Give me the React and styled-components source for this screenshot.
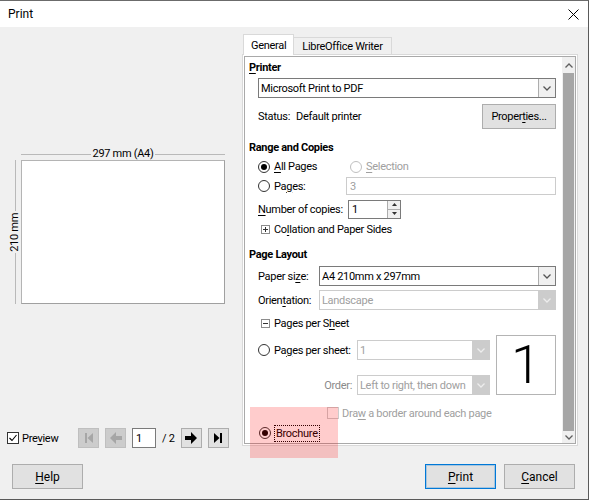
import styled, { createGlobalStyle } from 'styled-components'

const GlobalStyle = createGlobalStyle`
  html, body { margin: 0; padding: 0; background: #fff; }
  body {
    font-family: Roboto, "Noto Sans", "Liberation Sans", sans-serif;
    font-size: 11px;
    letter-spacing: -0.3px;
    color: #000;
  }
  * { box-sizing: border-box; }
`

const Dialog = styled.div`
  position: relative;
  width: 589px;
  height: 500px;
  display: flex;
  flex-direction: column;
  background: #f0f0f0;
  border-top: 1px solid #6b6b6b;
  border-right: 1px solid #5a5a5a;
  border-bottom: 1px solid #5a5a5a;
  overflow: hidden;
`

const TitleBar = styled.div`
  height: 26px;
  flex: 0 0 26px;
  background: #fff;
  display: flex;
  align-items: center;
  justify-content: space-between;
  padding: 0 9px 0 8px;
  font-size: 12px;
  letter-spacing: 0;
`

const Body = styled.div`
  flex: 0 0 423px;
  display: flex;
  min-width: 0;
`

const LeftPane = styled.div`
  flex: 0 0 241px;
  display: flex;
  flex-direction: column;
  padding: 121px 0 3px 0;
`

const Figure = styled.div`
  display: grid;
  grid-template-columns: 12px 204px;
  grid-template-rows: 12px 144px;
  margin-left: 9px;
`

const DimH = styled.div`
  grid-column: 2;
  grid-row: 1;
  display: flex;
  align-items: center;
  gap: 2px;
  line-height: 12px;
`

const DimV = styled.div`
  grid-column: 1;
  grid-row: 2;
  display: flex;
  flex-direction: column;
  align-items: center;
  gap: 2px;
`

const Line = styled.div`
  flex: 1;
  background: #b9b9b9;
  ${p => (p.$vertical ? 'width: 1px;' : 'height: 1px;')}
`

const VText = styled.span`
  writing-mode: vertical-rl;
  transform: rotate(180deg);
  line-height: 12px;
`

const Page = styled.div`
  grid-column: 2;
  grid-row: 2;
  background: #fff;
  border: 1px solid #b4b4b4;
  border-right-color: #a0a0a0;
  border-bottom-color: #a0a0a0;
`

const NavRow = styled.div`
  margin-top: auto;
  height: 20px;
  display: flex;
  align-items: center;
  padding-left: 7px;
  gap: 6px;
  white-space: nowrap;
`

const CheckLabel = styled.label`
  display: flex;
  align-items: center;
  gap: 3px;
  width: ${p => (p.$w ? `${p.$w}px` : 'auto')};
  flex: 0 0 auto;
  white-space: nowrap;
  color: ${p => (p.$disabled ? '#a0a0a0' : '#000')};
`

const Check = styled.span`
  width: 12px;
  height: 12px;
  border: 1px solid ${p => (p.$disabled ? '#cccccc' : '#333')};
  background: #fff;
  display: inline-flex;
  align-items: center;
  justify-content: center;
`

const NavBtn = styled.div`
  flex: 0 0 21px;
  height: 20px;
  display: flex;
  align-items: center;
  justify-content: center;
  background: ${p => (p.$disabled ? '#cccccc' : '#e1e1e1')};
  border: 1px solid ${p => (p.$disabled ? '#bfbfbf' : '#adadad')};
  color: ${p => (p.$disabled ? '#a6a6a6' : '#000')};
`

const PageInput = styled.div`
  flex: 0 0 24px;
  height: 20px;
  background: #fff;
  border: 1px solid #7a7a7a;
  padding-left: 3px;
  display: flex;
  align-items: center;
`

const PageCount = styled.span`
  flex: 0 0 12px;
`

const RightPane = styled.div`
  flex: 1;
  min-width: 0;
  display: flex;
  flex-direction: column;
  padding: 7px 10px 5px 1px;
`

const TabStrip = styled.div`
  display: flex;
  align-items: flex-end;
  height: 21px;
  padding-left: 1px;
`

const Tab = styled.div`
  position: relative;
  z-index: ${p => (p.$active ? 2 : 1)};
  height: ${p => (p.$active ? 21 : 18)}px;
  padding: ${p => (p.$active ? '1px 7px 0' : '0 8px')};
  display: flex;
  align-items: center;
  background: ${p => (p.$active ? '#fff' : '#f0f0f0')};
  border: 1px solid #d9d9d9;
  border-bottom: ${p => (p.$active ? 'none' : '1px solid #d9d9d9')};
  margin-left: ${p => (p.$active ? 0 : -1)}px;
`

const Panel = styled.div`
  flex: 1;
  min-width: 0;
  margin-top: -1px;
  background: #fff;
  border: 1px solid #d9d9d9;
  padding: 1px;
  display: flex;
`

const Viewport = styled.div`
  flex: 1;
  min-width: 0;
  display: flex;
  border: 1px solid #a9a9a9;
  overflow: hidden;
`

const Content = styled.div`
  flex: 1;
  min-width: 0;
  display: flex;
  flex-direction: column;
  padding: 0 6px 0 4px;
  overflow: hidden;
`

const Scrollbar = styled.div`
  flex: 0 0 13px;
  display: flex;
  flex-direction: column;
  background: #f0f0f0;
`

const ScrollArrow = styled.div`
  height: ${p => p.$h}px;
  display: flex;
  align-items: center;
  justify-content: center;
`

const Thumb = styled.div`
  flex: 1;
  margin: 0 1px;
  background: #a6a6a6;
`

const Heading = styled.div`
  height: 20px;
  margin-top: ${p => p.$mt || 0}px;
  display: flex;
  align-items: center;
  font-weight: 700;
`

const Row = styled.div`
  height: ${p => p.$h || 20}px;
  margin-top: ${p => p.$mt || 0}px;
  display: flex;
  align-items: center;
  padding-left: ${p => p.$indent ?? 9}px;
  color: ${p => (p.$disabled ? '#a0a0a0' : '#000')};
`

const Option = styled.label`
  display: flex;
  align-items: center;
  gap: 4px;
  width: ${p => (p.$w ? `${p.$w}px` : 'auto')};
  flex: 0 0 auto;
  white-space: nowrap;
  color: ${p => (p.$disabled ? '#a0a0a0' : '#000')};
`

const Radio = styled.span`
  width: 12px;
  height: 12px;
  border-radius: 50%;
  border: 1px solid ${p => (p.$disabled ? '#bfbfbf' : '#333')};
  background: #fff;
  display: inline-flex;
  align-items: center;
  justify-content: center;

  &::after {
    content: '';
    width: 6px;
    height: 6px;
    border-radius: 50%;
    background: ${p => (p.$checked ? '#000' : 'transparent')};
  }
`

const Label = styled.span`
  width: ${p => (p.$w ? `${p.$w}px` : 'auto')};
  flex: 0 0 auto;
  white-space: nowrap;
  text-align: ${p => p.$align || 'left'};
  margin-right: ${p => p.$mr || 0}px;
  color: ${p => p.$color || 'inherit'};
`

const Key = styled.span`
  text-decoration: underline;
  text-underline-offset: 2px;
`

const Select = styled.div`
  flex: ${p => (p.$w ? `0 0 ${p.$w}px` : 1)};
  min-width: 0;
  height: 20px;
  display: flex;
  background: #fff;
  border: 1px solid ${p => (p.$disabled ? '#cccccc' : '#7a7a7a')};
  color: ${p => (p.$disabled ? '#a0a0a0' : '#000')};
`

const SelectText = styled.div`
  flex: 1;
  padding-left: 2px;
  display: flex;
  align-items: center;
  white-space: nowrap;
  overflow: hidden;
`

const SelectArrow = styled.div`
  flex: 0 0 17px;
  display: flex;
  align-items: center;
  justify-content: center;
  border-left: 1px solid ${p => (p.$disabled ? '#cccccc' : '#adadad')};
  background: ${p => (p.$disabled ? '#cccccc' : '#f0f0f0')};
`

const Field = styled.div`
  flex: ${p => (p.$w ? `0 0 ${p.$w}px` : 1)};
  min-width: 0;
  height: ${p => p.$h || 18}px;
  display: flex;
  align-items: center;
  background: #fff;
  padding-left: 3px;
  border: 1px solid ${p => (p.$disabled ? '#cccccc' : '#7a7a7a')};
  color: ${p => (p.$disabled ? '#a0a0a0' : '#000')};
`

const Spin = styled.div`
  margin-left: auto;
  width: 13px;
  height: 100%;
  display: flex;
  flex-direction: column;
  border-left: 1px solid #adadad;
`

const SpinPart = styled.div`
  flex: 1;
  display: flex;
  align-items: center;
  justify-content: center;
  background: #f0f0f0;
  border-bottom: ${p => (p.$top ? '1px solid #adadad' : 'none')};
`

const Expander = styled.span`
  margin: 0 4px 0 3px;
  display: inline-flex;
`

const Button = styled.div`
  width: ${p => p.$w || 71}px;
  height: 25px;
  flex: 0 0 auto;
  display: flex;
  align-items: center;
  justify-content: center;
  background: #e1e1e1;
  border: 1px solid ${p => (p.$default ? '#0078d7' : '#adadad')};
  box-shadow: ${p => (p.$default ? 'inset 0 0 0 1px rgba(0, 120, 215, 0.25)' : 'none')};
  margin-left: ${p => (p.$push ? 'auto' : '0')};
  font-size: ${p => (p.$big ? 12 : 11)}px;
  letter-spacing: ${p => (p.$big ? 0 : -0.3)}px;
`

const LayoutBlock = styled.div`
  height: 60px;
  margin-top: 2px;
  display: flex;
  gap: 6px;
  padding-left: 9px;
`

const LayoutLeft = styled.div`
  flex: 1;
  min-width: 0;
  display: flex;
  flex-direction: column;
`

const BigNumber = styled.div`
  flex: 0 0 60px;
  height: 60px;
  border: 1px solid #b4b4b4;
  background: #fff;
  display: flex;
  align-items: center;
  justify-content: center;
  font-size: 54px;
  font-weight: 300;
  line-height: 1;
  letter-spacing: 0;
`

const FocusLabel = styled.span`
  outline: 1px dotted #000;
  padding: 1px 1px;
`

const Footer = styled.div`
  flex: 1;
  display: flex;
  gap: 8px;
  padding: 13px 13px 0 12px;
`

const Highlight = styled.div`
  position: absolute;
  left: 250px;
  top: 406px;
  width: 88px;
  height: 51px;
  background: rgba(255, 0, 0, 0.2);
  pointer-events: none;
`

const Chevron = ({ up, color = 'currentColor' }) => (
  <svg width="8" height="5" viewBox="0 0 8 5">
    <polyline
      points={up ? '0.5,4.5 4,1 7.5,4.5' : '0.5,0.5 4,4 7.5,0.5'}
      fill="none"
      stroke={color}
      strokeWidth="1.3"
    />
  </svg>
)

const Tri = ({ up }) => (
  <svg width="5" height="3" viewBox="0 0 5 3">
    <polygon points={up ? '0,3 2.5,0 5,3' : '0,0 2.5,3 5,0'} fill="#333" />
  </svg>
)

const BoxSign = ({ plus }) => (
  <svg width="9" height="9" viewBox="0 0 9 9">
    <rect x="0.5" y="0.5" width="8" height="8" fill="#fff" stroke="#8c8c8c" />
    <line x1="2" y1="4.5" x2="7" y2="4.5" stroke="#333" />
    {plus && <line x1="4.5" y1="2" x2="4.5" y2="7" stroke="#333" />}
  </svg>
)

const Tick = () => (
  <svg width="10" height="10" viewBox="0 0 10 10">
    <polyline points="1.5,5 4,7.5 8.5,2" fill="none" stroke="#000" strokeWidth="1.1" />
  </svg>
)

const FirstIcon = () => (
  <svg width="10" height="12" viewBox="0 0 10 12">
    <rect x="1" y="1" width="2" height="10" fill="currentColor" />
    <polygon points="9,1 3.5,6 9,11" fill="currentColor" />
  </svg>
)

const LastIcon = () => (
  <svg width="10" height="12" viewBox="0 0 10 12">
    <polygon points="1,1 6.5,6 1,11" fill="currentColor" />
    <rect x="7" y="1" width="2" height="10" fill="currentColor" />
  </svg>
)

const ArrowIcon = ({ left }) => (
  <svg width="14" height="12" viewBox="0 0 14 12">
    <path
      d="M1 4h6V0l6 6-6 6V8H1z"
      fill="currentColor"
      transform={left ? 'translate(14 0) scale(-1 1)' : undefined}
    />
  </svg>
)

const CloseIcon = () => (
  <svg width="11" height="11" viewBox="0 0 11 11">
    <path d="M0.5 0.5L10.5 10.5M10.5 0.5L0.5 10.5" stroke="#000" strokeWidth="1" />
  </svg>
)

function Dropdown({ value, disabled, width }) {
  return (
    <Select $disabled={disabled} $w={width}>
      <SelectText>{value}</SelectText>
      <SelectArrow $disabled={disabled}>
        <Chevron color={disabled ? '#ededed' : '#555'} />
      </SelectArrow>
    </Select>
  )
}

export default function App() {
  return (
    <>
      <GlobalStyle />
      <Dialog>
        <TitleBar>
          <span>Print</span>
          <CloseIcon />
        </TitleBar>

        <Body>
          <LeftPane>
            <Figure>
              <DimH>
                <Line />
                <span>297 mm (A4)</span>
                <Line />
              </DimH>
              <DimV>
                <Line $vertical />
                <VText>210 mm</VText>
                <Line $vertical />
              </DimV>
              <Page />
            </Figure>

            <NavRow>
              <CheckLabel $w={65}>
                <Check>
                  <Tick />
                </Check>
                <span>
                  Pre<Key>v</Key>iew
                </span>
              </CheckLabel>
              <NavBtn $disabled>
                <FirstIcon />
              </NavBtn>
              <NavBtn $disabled>
                <ArrowIcon left />
              </NavBtn>
              <PageInput>1</PageInput>
              <PageCount>/ 2</PageCount>
              <NavBtn>
                <ArrowIcon />
              </NavBtn>
              <NavBtn>
                <LastIcon />
              </NavBtn>
            </NavRow>
          </LeftPane>

          <RightPane>
            <TabStrip>
              <Tab $active>General</Tab>
              <Tab>LibreOffice Writer</Tab>
            </TabStrip>
            <Panel>
              <Viewport>
                <Content>
                  <Heading>
                    <span>
                      <Key>P</Key>rinter
                    </span>
                  </Heading>
                  <Row $mt={1}>
                    <Dropdown value="Microsoft Print to PDF" />
                  </Row>
                  <Row $h={25} $mt={6}>
                    <Label $w={38}>Status:</Label>
                    <Label>Default printer</Label>
                    <Button $w={74} $push>
                      Proper<Key>t</Key>ies...
                    </Button>
                  </Row>

                  <Heading $mt={8}>Range and Copies</Heading>
                  <Row $h={19}>
                    <Option $w={92}>
                      <Radio $checked />
                      <span>
                        <Key>A</Key>ll Pages
                      </span>
                    </Option>
                    <Option $disabled>
                      <Radio $disabled />
                      <span>
                        <Key>S</Key>election
                      </span>
                    </Option>
                  </Row>
                  <Row>
                    <Option $w={88}>
                      <Radio />
                      <span>
                        Pa<Key>g</Key>es:
                      </span>
                    </Option>
                    <Field $disabled>3</Field>
                  </Row>
                  <Row $mt={3}>
                    <Label $w={90}>
                      <Key>N</Key>umber of copies:
                    </Label>
                    <Field $w={53} $h={19}>
                      1
                      <Spin>
                        <SpinPart $top>
                          <Tri up />
                        </SpinPart>
                        <SpinPart>
                          <Tri />
                        </SpinPart>
                      </Spin>
                    </Field>
                  </Row>
                  <Row>
                    <Expander>
                      <BoxSign plus />
                    </Expander>
                    <span>
                      Co<Key>l</Key>lation and Paper Sides
                    </span>
                  </Row>

                  <Heading $mt={5}>Page Layout</Heading>
                  <Row $mt={2}>
                    <Label $w={61}>
                      Paper si<Key>z</Key>e:
                    </Label>
                    <Dropdown value="A4 210mm x 297mm" />
                  </Row>
                  <Row $mt={4}>
                    <Label $w={61}>
                      Orien<Key>t</Key>ation:
                    </Label>
                    <Dropdown value="Landscape" disabled />
                  </Row>
                  <Row $mt={3}>
                    <Expander>
                      <BoxSign />
                    </Expander>
                    <span>
                      Pages per S<Key>h</Key>eet
                    </span>
                  </Row>

                  <LayoutBlock>
                    <LayoutLeft>
                      <Row $mt={5} $indent={0}>
                        <Option $w={99}>
                          <Radio />
                          <span>
                            Pa<Key>g</Key>es per sheet:
                          </span>
                        </Option>
                        <Dropdown value="1" disabled />
                      </Row>
                      <Row $mt={15} $indent={0}>
                        <Label $w={94} $align="right" $mr={5} $color="#8a8a8a">
                          Order:
                        </Label>
                        <Dropdown value="Left to right, then down" disabled />
                      </Row>
                    </LayoutLeft>
                    <BigNumber>1</BigNumber>
                  </LayoutBlock>

                  <Row $mt={8} $indent={78}>
                    <CheckLabel $disabled>
                      <Check $disabled />
                      <span>
                        Dra<Key>w</Key> a border around each page
                      </span>
                    </CheckLabel>
                  </Row>
                  <Row $indent={10}>
                    <Option>
                      <Radio $checked />
                      <FocusLabel>Brochure</FocusLabel>
                    </Option>
                  </Row>
                </Content>
                <Scrollbar>
                  <ScrollArrow $h={16}>
                    <Chevron up color="#606060" />
                  </ScrollArrow>
                  <Thumb />
                  <ScrollArrow $h={12}>
                    <Chevron color="#606060" />
                  </ScrollArrow>
                </Scrollbar>
              </Viewport>
            </Panel>
          </RightPane>
        </Body>

        <Footer>
          <Button $big>
            <span>
              <Key>H</Key>elp
            </span>
          </Button>
          <Button $big $push $default>
            <span>
              <Key>P</Key>rint
            </span>
          </Button>
          <Button $big>
            <span>
              <Key>C</Key>ancel
            </span>
          </Button>
        </Footer>

        <Highlight />
      </Dialog>
    </>
  )
}
